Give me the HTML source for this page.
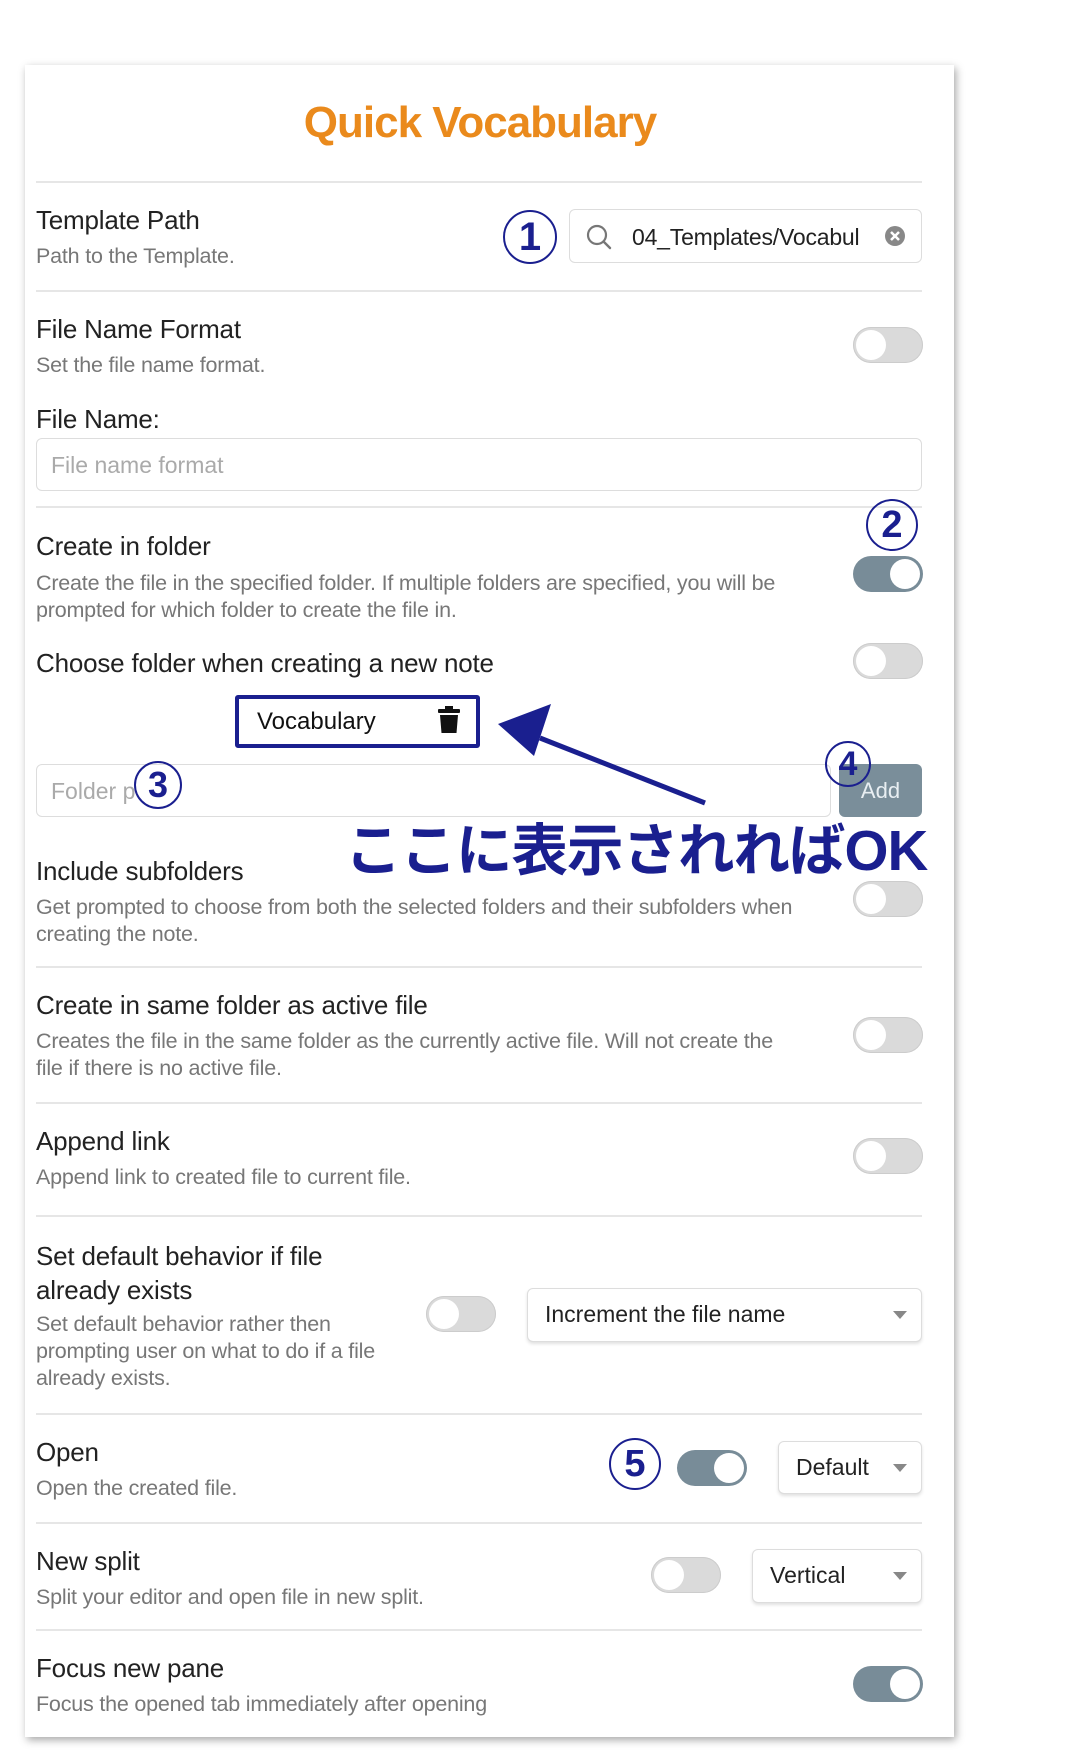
<!DOCTYPE html>
<html><head><meta charset="utf-8">
<style>
*{margin:0;padding:0;box-sizing:border-box}
body{width:1066px;height:1758px;background:#fff;position:relative;overflow:hidden;font-family:"Liberation Sans","Noto Sans CJK JP",sans-serif;}
.card{position:absolute;left:25px;top:65px;width:929px;height:1672px;background:#fff;box-shadow:2px 3px 8px rgba(0,0,0,.35);}
.a{position:absolute;white-space:nowrap}
.t{font-size:26px;color:#222;letter-spacing:-0.2px;line-height:30px}
.d{font-size:21.5px;color:#777;letter-spacing:-0.2px;line-height:27px}
.hr{position:absolute;left:36px;width:886px;height:2px;background:#e6e6e6}
.tg{position:absolute;width:70px;height:36px;border-radius:18px;background:#dadada;box-shadow:inset 0 0 0 1px #ccc}
.tg::after{content:"";position:absolute;left:3px;top:3px;width:30px;height:30px;border-radius:50%;background:#fff}
.tg.on{background:#788c98;box-shadow:none}
.tg.on::after{left:37px}
.in{position:absolute;border:1.5px solid #ddd;border-radius:6px;background:#fff}
.dd{position:absolute;border:1.5px solid #ddd;border-radius:6px;background:#fff;box-shadow:0 2px 3px rgba(0,0,0,.12);font-size:23px;color:#222;line-height:51px;padding-left:17px}
.dd::after{content:"";position:absolute;right:14px;top:22px;border:7px solid transparent;border-top:8px solid #888;border-bottom:0}
.c{position:absolute;border:2px solid #1a1f8f;border-radius:50%;color:#1a1f8f;font-weight:bold;text-align:center;background:transparent}
</style></head><body>
<div class="card"></div>
<div class="a" style="left:0;width:960px;top:95px;text-align:center;font-size:44px;font-weight:bold;color:#ea8a1c;letter-spacing:-1px;line-height:56px">Quick Vocabulary</div>
<div class="hr" style="top:181px"></div>

<div class="a t" style="left:36px;top:205px">Template Path</div>
<div class="a d" style="left:36px;top:243px">Path to the Template.</div>
<div class="in" style="left:569px;top:209px;width:353px;height:54px"></div>
<svg class="a" style="left:584px;top:222px" width="30" height="30" viewBox="0 0 30 30"><circle cx="13" cy="13" r="9" fill="none" stroke="#777" stroke-width="2.2"/><line x1="19.5" y1="19.5" x2="26" y2="26" stroke="#777" stroke-width="2.4" stroke-linecap="round"/></svg>
<div class="a" style="left:632px;top:223px;font-size:23px;color:#222;line-height:28px;letter-spacing:-0.2px">04_Templates/Vocabul</div>
<svg class="a" style="left:884px;top:225px" width="22" height="22" viewBox="0 0 22 22"><circle cx="11" cy="11" r="10" fill="#888"/><path d="M7 7L15 15M15 7L7 15" stroke="#fff" stroke-width="2.5"/></svg>
<div class="c" style="left:503px;top:210px;width:54px;height:54px;font-size:40px;line-height:50px">1</div>
<div class="hr" style="top:290px"></div>

<div class="a t" style="left:36px;top:314px">File Name Format</div>
<div class="a d" style="left:36px;top:352px">Set the file name format.</div>
<div class="tg" style="left:853px;top:327px"></div>
<div class="a t" style="left:36px;top:404px">File Name:</div>
<div class="in" style="left:36px;top:438px;width:886px;height:53px"></div>
<div class="a" style="left:51px;top:451px;font-size:23px;color:#aaa;line-height:28px">File name format</div>
<div class="hr" style="top:506px"></div>

<div class="c" style="left:866px;top:499px;width:52px;height:52px;font-size:38px;line-height:48px">2</div>
<div class="a t" style="left:36px;top:531px">Create in folder</div>
<div class="a d" style="left:36px;top:570px">Create the file in the specified folder. If multiple folders are specified, you will be<br>prompted for which folder to create the file in.</div>
<div class="tg on" style="left:853px;top:556px"></div>

<div class="a t" style="left:36px;top:648px">Choose folder when creating a new note</div>
<div class="tg" style="left:853px;top:643px"></div>

<div class="a" style="left:235px;top:695px;width:245px;height:53px;border:4px solid #1a1f8f;border-radius:3px;background:#fff"></div>
<div class="a" style="left:257px;top:707px;font-size:24px;color:#111;line-height:30px">Vocabulary</div>
<svg class="a" style="left:437px;top:706px" width="24" height="28" viewBox="0 0 24 28"><rect x="8" y="0" width="8" height="3" fill="#111"/><rect x="1" y="3" width="22" height="4" rx="1" fill="#111"/><path d="M3 9H21L19.5 27H4.5Z" fill="#111"/></svg>

<div class="in" style="left:36px;top:764px;width:795px;height:53px"></div>
<div class="a" style="left:51px;top:777px;font-size:23px;color:#aaa;line-height:28px">Folder p</div>
<div class="a" style="left:839px;top:764px;width:83px;height:53px;background:#7a8e9a;border-radius:6px;color:#e8eef2;font-size:22px;text-align:center;line-height:53px">Add</div>
<div class="c" style="left:134px;top:761px;width:48px;height:48px;font-size:36px;line-height:44px">3</div>
<div class="c" style="left:825px;top:741px;width:46px;height:46px;font-size:34px;line-height:42px">4</div>

<svg class="a" style="left:0;top:0" width="1066" height="1000" viewBox="0 0 1066 1000"><line x1="705" y1="803" x2="540" y2="738" stroke="#1a1f8f" stroke-width="5"/><polygon points="498,724 551,704 534,756" fill="#1a1f8f"/></svg>
<div class="a" style="left:345px;top:818px;font-size:56.5px;font-weight:bold;color:#1a1f8f;line-height:66px;letter-spacing:-1px">ここに表示されればOK</div>

<div class="a t" style="left:36px;top:856px">Include subfolders</div>
<div class="a d" style="left:36px;top:894px">Get prompted to choose from both the selected folders and their subfolders when<br>creating the note.</div>
<div class="tg" style="left:853px;top:881px"></div>
<div class="hr" style="top:966px"></div>

<div class="a t" style="left:36px;top:990px">Create in same folder as active file</div>
<div class="a d" style="left:36px;top:1028px">Creates the file in the same folder as the currently active file. Will not create the<br>file if there is no active file.</div>
<div class="tg" style="left:853px;top:1017px"></div>
<div class="hr" style="top:1102px"></div>

<div class="a t" style="left:36px;top:1126px">Append link</div>
<div class="a d" style="left:36px;top:1164px">Append link to created file to current file.</div>
<div class="tg" style="left:853px;top:1138px"></div>
<div class="hr" style="top:1215px"></div>

<div class="a t" style="left:36px;top:1239px;line-height:34px">Set default behavior if file<br>already exists</div>
<div class="a d" style="left:36px;top:1311px">Set default behavior rather then<br>prompting user on what to do if a file<br>already exists.</div>
<div class="tg" style="left:426px;top:1296px"></div>
<div class="dd" style="left:527px;top:1288px;width:395px;height:54px">Increment the file name</div>
<div class="hr" style="top:1413px"></div>

<div class="a t" style="left:36px;top:1437px">Open</div>
<div class="a d" style="left:36px;top:1475px">Open the created file.</div>
<div class="c" style="left:609px;top:1438px;width:52px;height:52px;font-size:38px;line-height:48px">5</div>
<div class="tg on" style="left:677px;top:1450px"></div>
<div class="dd" style="left:778px;top:1441px;width:144px;height:53px">Default</div>
<div class="hr" style="top:1522px"></div>

<div class="a t" style="left:36px;top:1546px">New split</div>
<div class="a d" style="left:36px;top:1584px">Split your editor and open file in new split.</div>
<div class="tg" style="left:651px;top:1557px"></div>
<div class="dd" style="left:752px;top:1549px;width:170px;height:54px">Vertical</div>
<div class="hr" style="top:1629px"></div>

<div class="a t" style="left:36px;top:1653px">Focus new pane</div>
<div class="a d" style="left:36px;top:1691px">Focus the opened tab immediately after opening</div>
<div class="tg on" style="left:853px;top:1666px"></div>
</body></html>
